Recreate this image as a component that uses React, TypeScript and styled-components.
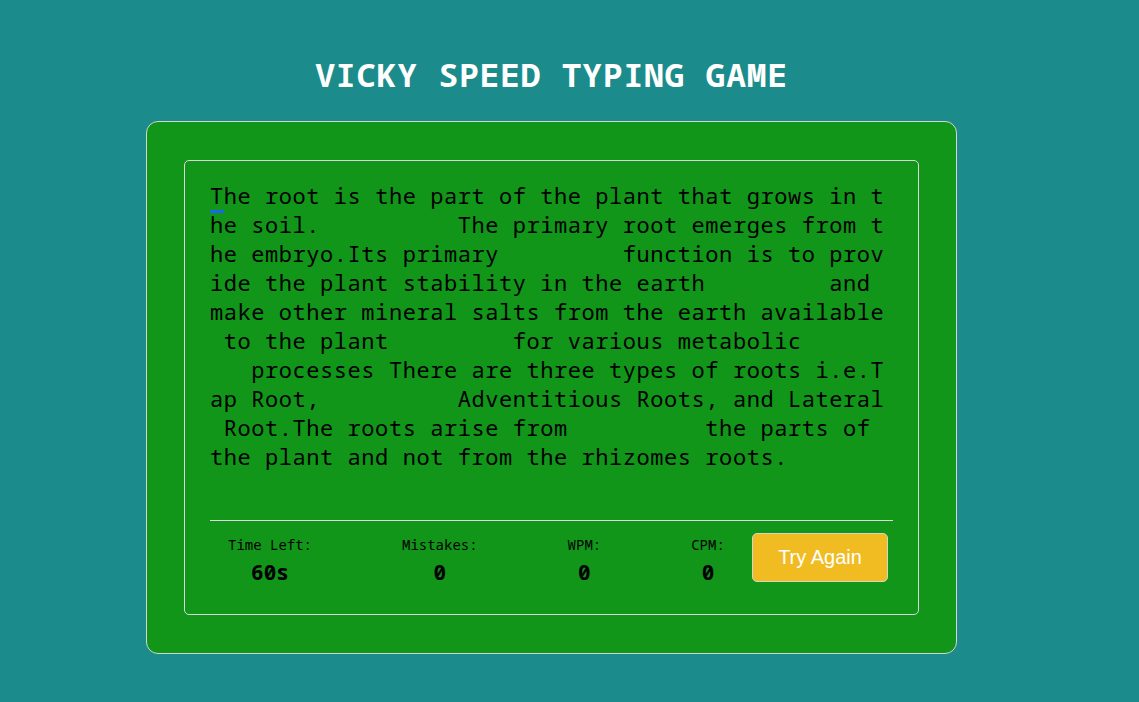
import React from "react";
import styled, { createGlobalStyle } from "styled-components";

const MONO = `"Noto Sans Mono", "DejaVu Sans Mono", monospace`;

const GlobalStyle = createGlobalStyle`
  html, body {
    margin: 0;
    padding: 0;
    background: #1b8c8b;
  }
  body {
    min-height: 100vh;
    font-family: ${MONO};
  }
`;

const Page = styled.main`
  display: flex;
  flex-direction: column;
  align-items: center;
  padding: 55px 36px 40px 0;
`;

const Title = styled.h1`
  margin: 0 0 27px;
  font-family: ${MONO};
  font-size: 33px;
  line-height: 39px;
  font-weight: bold;
  letter-spacing: 0.75px;
  color: #ffffff;
`;

const Card = styled.section`
  box-sizing: border-box;
  width: 811px;
  padding: 38px 37px;
  background: #11961a;
  border: 1px solid #d4d4d4;
  border-radius: 12px;
`;

const ContentBox = styled.div`
  padding: 20px 25px 19px;
  border: 1px solid #d8d8d8;
  border-radius: 5px;
`;

const TypingText = styled.p`
  margin: 0 0 49px;
  font-family: ${MONO};
  font-size: 22px;
  line-height: 29px;
  letter-spacing: 0.56px;
  color: #000000;
  white-space: break-spaces;
  word-break: break-all;
  line-break: anywhere;
`;

const ActiveChar = styled.span`
  border-bottom: 3px solid #1a66ee;
`;

const Footer = styled.div`
  display: flex;
  align-items: flex-start;
  padding: 12px 0 13px;
  border-top: 1px solid #dcdcdc;
`;

const StatList = styled.ul`
  display: flex;
  gap: 90px;
  margin: 0;
  padding: 4px 0 0 18px;
  list-style: none;
`;

const Stat = styled.li`
  display: flex;
  flex-direction: column;
  align-items: center;
`;

const StatLabel = styled.span`
  font-family: ${MONO};
  font-size: 14px;
  line-height: 16px;
  color: #000000;
`;

const StatValue = styled.span`
  margin-top: 9px;
  font-family: ${MONO};
  font-size: 21px;
  line-height: 20px;
  font-weight: bold;
  color: #000000;
`;

const RetryButton = styled.button`
  box-sizing: border-box;
  width: 136px;
  height: 49px;
  margin: 0 5px 0 auto;
  padding: 0;
  background: #f0bc22;
  border: 1px solid #d6d6c8;
  border-radius: 5px;
  color: #ffffff;
  font-family: "Liberation Sans", Arial, sans-serif;
  font-size: 20px;
  cursor: pointer;
`;

const PARAGRAPH =
  "he root is the part of the plant that grows in the soil.          The primary root emerges from the embryo.Its primary         function is to provide the plant stability in the earth         and make other mineral salts from the earth available to the plant         for various metabolic         processes There are three types of roots i.e.Tap Root,          Adventitious Roots, and Lateral Root.The roots arise from          the parts of the plant and not from the rhizomes roots.";

const stats = [
  { label: "Time Left:", value: "60s" },
  { label: "Mistakes:", value: "0" },
  { label: "WPM:", value: "0" },
  { label: "CPM:", value: "0" },
];

export default function App() {
  return (
    <>
      <GlobalStyle />
      <Page>
        <Title>VICKY SPEED TYPING GAME</Title>
        <Card>
          <ContentBox>
            <TypingText>
              <ActiveChar>T</ActiveChar>
              {PARAGRAPH}
            </TypingText>
            <Footer>
              <StatList>
                {stats.map((s) => (
                  <Stat key={s.label}>
                    <StatLabel>{s.label}</StatLabel>
                    <StatValue>{s.value}</StatValue>
                  </Stat>
                ))}
              </StatList>
              <RetryButton type="button">Try Again</RetryButton>
            </Footer>
          </ContentBox>
        </Card>
      </Page>
    </>
  );
}
